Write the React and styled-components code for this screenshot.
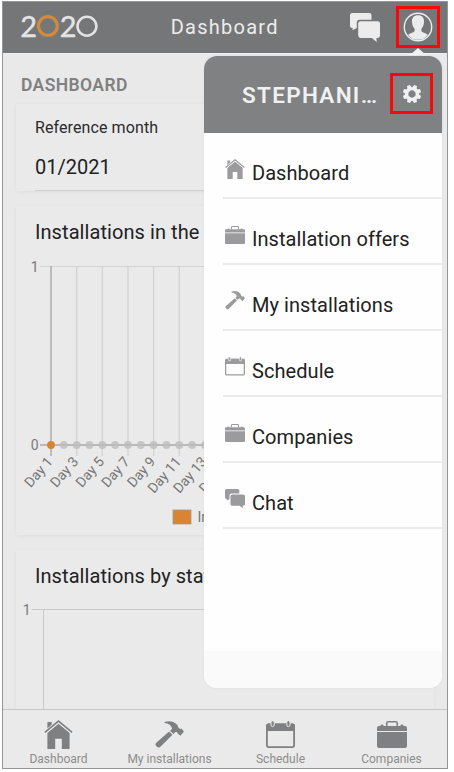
import React from "react";
import styled, { createGlobalStyle } from "styled-components";

const GlobalStyle = createGlobalStyle`
  * {
    box-sizing: border-box;
  }

  body {
    margin: 0;
    background-color: #ffffff;
    font-family: Roboto, "Liberation Sans", sans-serif;
  }
`;

const Phone = styled.div`
  position: relative;
  display: flex;
  flex-direction: column;
  width: 446px;
  height: 768px;
  margin: 1px 0 0 2px;
  border: 1px solid #969696;
  background-color: #e9e9e9;
  overflow: hidden;
`;

const Header = styled.header`
  position: relative;
  display: flex;
  align-items: center;
  flex: none;
  height: 51px;
  padding: 0 7px 1px 18px;
  background-color: #757678;
`;

const Title = styled.h1`
  margin: 0 0 0 70px;
  width: 180px;
  color: #ececec;
  font-size: 20px;
  font-weight: 400;
  line-height: 24px;
  letter-spacing: 1.25px;
`;

const Highlight = styled.div`
  display: flex;
  align-items: center;
  justify-content: center;
  flex: none;
  width: ${(props) => props.$width}px;
  height: ${(props) => props.$height}px;
  border: 3px solid #fb0707;
`;

const HeaderIcons = styled.div`
  display: flex;
  align-items: center;
  margin-left: auto;
  gap: 16px;
  color: #ececec;
`;

const Arrow = styled.div`
  position: absolute;
  right: 21px;
  bottom: -2px;
  border-left: 8px solid transparent;
  border-right: 8px solid transparent;
  border-bottom: 7px solid #f3f3f3;
`;

const Content = styled.main`
  display: flex;
  flex-direction: column;
  flex: 1;
  min-height: 0;
  overflow: hidden;
  padding: 0 13px;
  border-top: 1px solid #f0f0f0;
`;

const PageTitle = styled.h2`
  flex: none;
  margin: 20px 0 8px 5px;
  color: #808080;
  font-size: 17.5px;
  font-weight: 600;
  line-height: 22px;
  letter-spacing: 0.4px;
`;

const Card = styled.section`
  flex: none;
  height: ${(props) => props.$height}px;
  margin-bottom: 15px;
  border-radius: 3px;
  background-color: #eaeaea;
  box-shadow: 0 1px 4px rgba(0, 0, 0, 0.05);
  overflow: hidden;
`;

const Field = styled.div`
  margin: 0 19px;
  padding-top: 14px;
  height: 87px;
  border-bottom: 1px solid #cfcfcf;
`;

const Label = styled.div`
  color: #2b2b2b;
  font-size: 16px;
  line-height: 20px;
  letter-spacing: 0.1px;
`;

const Value = styled.div`
  margin-top: 17px;
  color: #222222;
  font-size: 20px;
  line-height: 24px;
`;

const CardTitle = styled.h3`
  margin: 14px 0 0 19px;
  color: #222222;
  font-size: 20px;
  font-weight: 400;
  line-height: 24px;
  letter-spacing: 0.07px;
  white-space: nowrap;
`;

const Chart = styled.svg`
  display: block;
  font-family: Roboto, sans-serif;
`;

const TabBar = styled.nav`
  display: grid;
  grid-template-columns: repeat(4, 1fr);
  flex: none;
  height: 59px;
  border-top: 1px solid #c6c6c6;
  background-color: #eaeaea;
`;

const Tab = styled.div`
  display: flex;
  flex-direction: column;
  align-items: center;
  padding-top: 9px;
  color: #7f8082;
  font-size: 12px;
  line-height: 16px;
`;

const TabIcon = styled.div`
  display: flex;
  align-items: center;
  height: 30px;
  margin-bottom: 2px;
`;

const TabLabel = styled.span`
  color: #8d8d8d;
`;

const Menu = styled.aside`
  position: absolute;
  top: 54px;
  right: 5px;
  display: flex;
  flex-direction: column;
  width: 238px;
  height: 632px;
  border-radius: 13px;
  background-color: #fefefe;
  box-shadow: 0 0 3px rgba(0, 0, 0, 0.05);
  overflow: hidden;
`;

const MenuHeader = styled.div`
  display: flex;
  align-items: center;
  flex: none;
  height: 77px;
  padding: 0 9px 2px 38px;
  background-color: #808183;
  color: #f1f1f1;
`;

const UserName = styled.div`
  flex: 1;
  min-width: 0;
  padding-top: 2px;
  font-size: 22.5px;
  font-weight: 600;
  line-height: 28px;
  letter-spacing: 1.3px;
  white-space: nowrap;
`;

const MenuList = styled.ul`
  flex: 1;
  margin: 0;
  padding: 0 0 0 19px;
  list-style: none;
`;

const MenuItem = styled.li`
  display: flex;
  align-items: flex-start;
  height: 66px;
  padding: 25px 0 0 2px;
  border-bottom: 2px solid #ebebeb;
  color: #9b9b9d;
`;

const MenuIcon = styled.span`
  display: flex;
  align-items: center;
  justify-content: center;
  width: 20px;
  height: 21px;
  margin-right: 7px;
`;

const MenuText = styled.span`
  margin-top: 3px;
  color: #222222;
  font-size: 20px;
  line-height: 24px;
  letter-spacing: 0.06px;
`;

const MenuFooter = styled.div`
  flex: none;
  height: 37px;
  background-color: #fafafa;
`;

const Logo = () => (
  <svg width="80" height="40" viewBox="0 -6 80 40">
    <g fill="#e4e4e4" stroke="#e4e4e4" strokeWidth="0.4" fontFamily="Lato, sans-serif" fontSize="29">
      <text x="-0.7" y="23.6">2</text>
      <text x="38.8" y="23.6">2</text>
    </g>
    <circle cx="27" cy="13" r="9.4" fill="none" stroke="#d08b3f" strokeWidth="3.2" />
    <circle cx="66.2" cy="13.2" r="9.5" fill="none" stroke="#e4e4e4" strokeWidth="2.5" />
  </svg>
);

const HouseIcon = ({ size = 29, gap = "#eaeaea" }) => (
  <svg width={size} height={size} viewBox="0 0 29 29" fill="currentColor">
    <path d="M3.4 2h4.3v3.3L3.4 9zM3.4 12.8 14.5 3.8l11.1 9V29h-7.8V18.7h-6.6V29H3.4z" />
    <path d="M.9 12.6 14.5 1.2l13.6 11.4" fill="none" stroke={gap} strokeWidth="3.4" />
    <path d="M.9 12.3 14.5 1.1l13.6 11.2" fill="none" stroke="currentColor" strokeWidth="1.7" />
  </svg>
);

const HammerIcon = ({ size = 29 }) => (
  <svg width={size} height={(size * 27) / 29} viewBox="0 0 29 27" fill="currentColor">
    <path d="M9.5.9C14-.6 19 .1 22 3.6c1.3 1.600 1 3.400 3 4.300l1.400-.3 2.600 2.800-3.600 4.300-2.800-2.200c0-1.300-.8-1.900-2.200-1.500l-2 2-3.300-3.300 2-2C16.900 4.800 13.500 2.300 9.500 2z" />
    <path d="M14.100 10.400l3.400 3.300L5.200 26C3.200 27.700-.7 24.200 1 22z" />
  </svg>
);

const CalendarIcon = ({ size = 29, gap = "#eaeaea" }) => (
  <svg width={size} height={(size * 27) / 29} viewBox="0 0 29 27">
    <rect x="0.9" y="3.4" width="27.2" height="22.7" rx="1.8" fill="none" stroke="currentColor" strokeWidth="1.8" />
    <path d="M0 10V5q0-2.5 2.5-2.5h24Q29 2.5 29 5v5z" fill="currentColor" />
    <g stroke={gap} strokeWidth="1" fill="currentColor">
      <rect x="5" y="-0.4" width="3.2" height="6" rx="1.6" />
      <rect x="20.8" y="-0.4" width="3.2" height="6" rx="1.6" />
    </g>
  </svg>
);

const BriefcaseIcon = ({ size = 30 }) => (
  <svg width={size} height={(size * 27) / 30} viewBox="0 0 30 27" fill="currentColor">
    <path d="M9.7 5V2.2Q9.7.8 11.1.8h7.8q1.4 0 1.4 1.4V5" fill="none" stroke="currentColor" strokeWidth="1.6" />
    <path d="M0 9.9V7Q0 5 2 5h1.3q.3-1.4 1.7-1.4T6.8 5h16.4q.4-1.4 1.8-1.4T26.7 5H28q2 0 2 2v2.9z" />
    <path d="M0 11h30v14q0 2-2 2H2q-2 0-2-2z" />
  </svg>
);

const ChatIcon = ({ size = 30 }) => (
  <svg width={size} height={(size * 29) / 30} viewBox="0 0 30 29" fill="currentColor">
    <path d="M2.3 0h16.9q2.3 0 2.3 2.3v4.5H9.6Q6.8 6.8 6.8 9.6V15l-4.3 2.2.2-2.1Q0 15 0 12.8V2.3Q0 0 2.3 0z" />
    <path d="M10.6 8.2h17Q30 8.2 30 10.6v12q0 2.4-2.4 2.4h-1.2l.3 4-4.9-4H10.6q-2.4 0-2.4-2.4v-12q0-2.4 2.4-2.4z" />
  </svg>
);

const UserIcon = () => (
  <svg width="30" height="30" viewBox="0 0 30 30" fill="currentColor">
    <circle cx="15" cy="15" r="13.7" fill="none" stroke="currentColor" strokeWidth="1.4" />
    <path d="M15 3.2c4.2 0 6.2 2.6 6 6.4 0 3.3-1 5.5-2.6 7.2v2.3c.4 1.6 4.6 2 6.5 3.8A12.8 12.8 0 0 1 15 27.8a12.8 12.8 0 0 1-9.9-4.9c1.9-1.8 6.1-2.2 6.5-3.8v-2.3C10 15.1 9 12.9 9 9.6 8.8 5.8 10.8 3.2 15 3.2z" />
  </svg>
);

const GearIcon = () => (
  <svg width="20" height="20" viewBox="-10 -10 20 20" fill="currentColor">
    <circle r="5.4" fill="none" stroke="currentColor" strokeWidth="3.4" />
    {[22.5, 67.5, 112.5, 157.5, 202.5, 247.5, 292.5, 337.5].map((angle) => (
      <path key={angle} d="M-2.3-6.2-1.6-9.2h3.2l.7 3z" transform={`rotate(${angle})`} />
    ))}
  </svg>
);

const menuItems = [
  { text: "Dashboard", icon: <HouseIcon size={20} gap="#fefefe" /> },
  { text: "Installation offers", icon: <BriefcaseIcon size={20} /> },
  { text: "My installations", icon: <HammerIcon size={20} /> },
  { text: "Schedule", icon: <CalendarIcon size={20} gap="#fefefe" /> },
  { text: "Companies", icon: <BriefcaseIcon size={20} /> },
  { text: "Chat", icon: <ChatIcon size={20} /> },
];

const tabs = [
  { text: "Dashboard", icon: <HouseIcon /> },
  { text: "My installations", icon: <HammerIcon /> },
  { text: "Schedule", icon: <CalendarIcon /> },
  { text: "Companies", icon: <BriefcaseIcon /> },
];

const days = Array.from({ length: 30 }, (_, i) => i + 1);
const dayX = (day) => 35 + (day - 1) * 12.83;

const MonthChart = () => (
  <Chart width="418" height="292" viewBox="0 0 418 292">
    <g fill="#7a7a7a" fontSize="14" textAnchor="end">
      <text x="22.5" y="27.5">1</text>
      <text x="22.5" y="206">0</text>
    </g>
    <path d="M24 22.5H410" stroke="#d3d3d3" />
    {days
      .filter((day) => day % 2 === 1)
      .map((day) => (
        <g key={day}>
          <path d={`M${dayX(day)} 22V212`} stroke={day === 1 ? "#a3a3a3" : "#d3d3d3"} strokeWidth="1.3" />
          <text
            transform={`translate(${dayX(day) + 2.5} 218) rotate(-49)`}
            fill="#777777"
            fontSize="14"
            textAnchor="end"
          >
            Day {day}
          </text>
        </g>
      ))}
    <path d="M24 201H410" stroke="#a9a9a9" strokeWidth="1.5" />
    {days.map((day) => (
      <circle key={day} cx={dayX(day)} cy="201" r="3.9" fill={day === 1 ? "#d98432" : "#bdbdbd"} fillOpacity={day === 1 ? 1 : 0.8} />
    ))}
    <rect x="157" y="266" width="18" height="14" fill="#d98432" stroke="#a99b8c" strokeWidth="0.8" />
    <text x="181.5" y="278" fill="#777777" fontSize="14">Installations</text>
  </Chart>
);

const StatusChart = () => (
  <Chart width="418" height="200" viewBox="0 0 418 200">
    <text x="14.5" y="27" fill="#7a7a7a" fontSize="14" textAnchor="end">1</text>
    <path d="M16 21.5H410M27.5 21V200" fill="none" stroke="#c9c9c9" />
  </Chart>
);

const App = () => {
  return (
    <>
      <GlobalStyle />
      <Phone>
        <Header>
          <Logo />
          <Title>Dashboard</Title>
          <HeaderIcons>
            <ChatIcon />
            <Highlight $width={44} $height={42}>
              <UserIcon />
            </Highlight>
          </HeaderIcons>
          <Arrow />
        </Header>

        <Content>
          <PageTitle>DASHBOARD</PageTitle>
          <Card $height={87}>
            <Field>
              <Label>Reference month</Label>
              <Value>01/2021</Value>
            </Field>
          </Card>
          <Card $height={329}>
            <CardTitle>Installations in the month</CardTitle>
            <MonthChart />
          </Card>
          <Card $height={240}>
            <CardTitle>Installations by status</CardTitle>
            <StatusChart />
          </Card>
        </Content>

        <TabBar>
          {tabs.map((tab) => (
            <Tab key={tab.text}>
              <TabIcon>{tab.icon}</TabIcon>
              <TabLabel>{tab.text}</TabLabel>
            </Tab>
          ))}
        </TabBar>

        <Menu>
          <MenuHeader>
            <UserName>STEPHANI…</UserName>
            <Highlight $width={43} $height={41}>
              <GearIcon />
            </Highlight>
          </MenuHeader>
          <MenuList>
            {menuItems.map((item) => (
              <MenuItem key={item.text}>
                <MenuIcon>{item.icon}</MenuIcon>
                <MenuText>{item.text}</MenuText>
              </MenuItem>
            ))}
          </MenuList>
          <MenuFooter />
        </Menu>
      </Phone>
    </>
  );
};

export default App;
